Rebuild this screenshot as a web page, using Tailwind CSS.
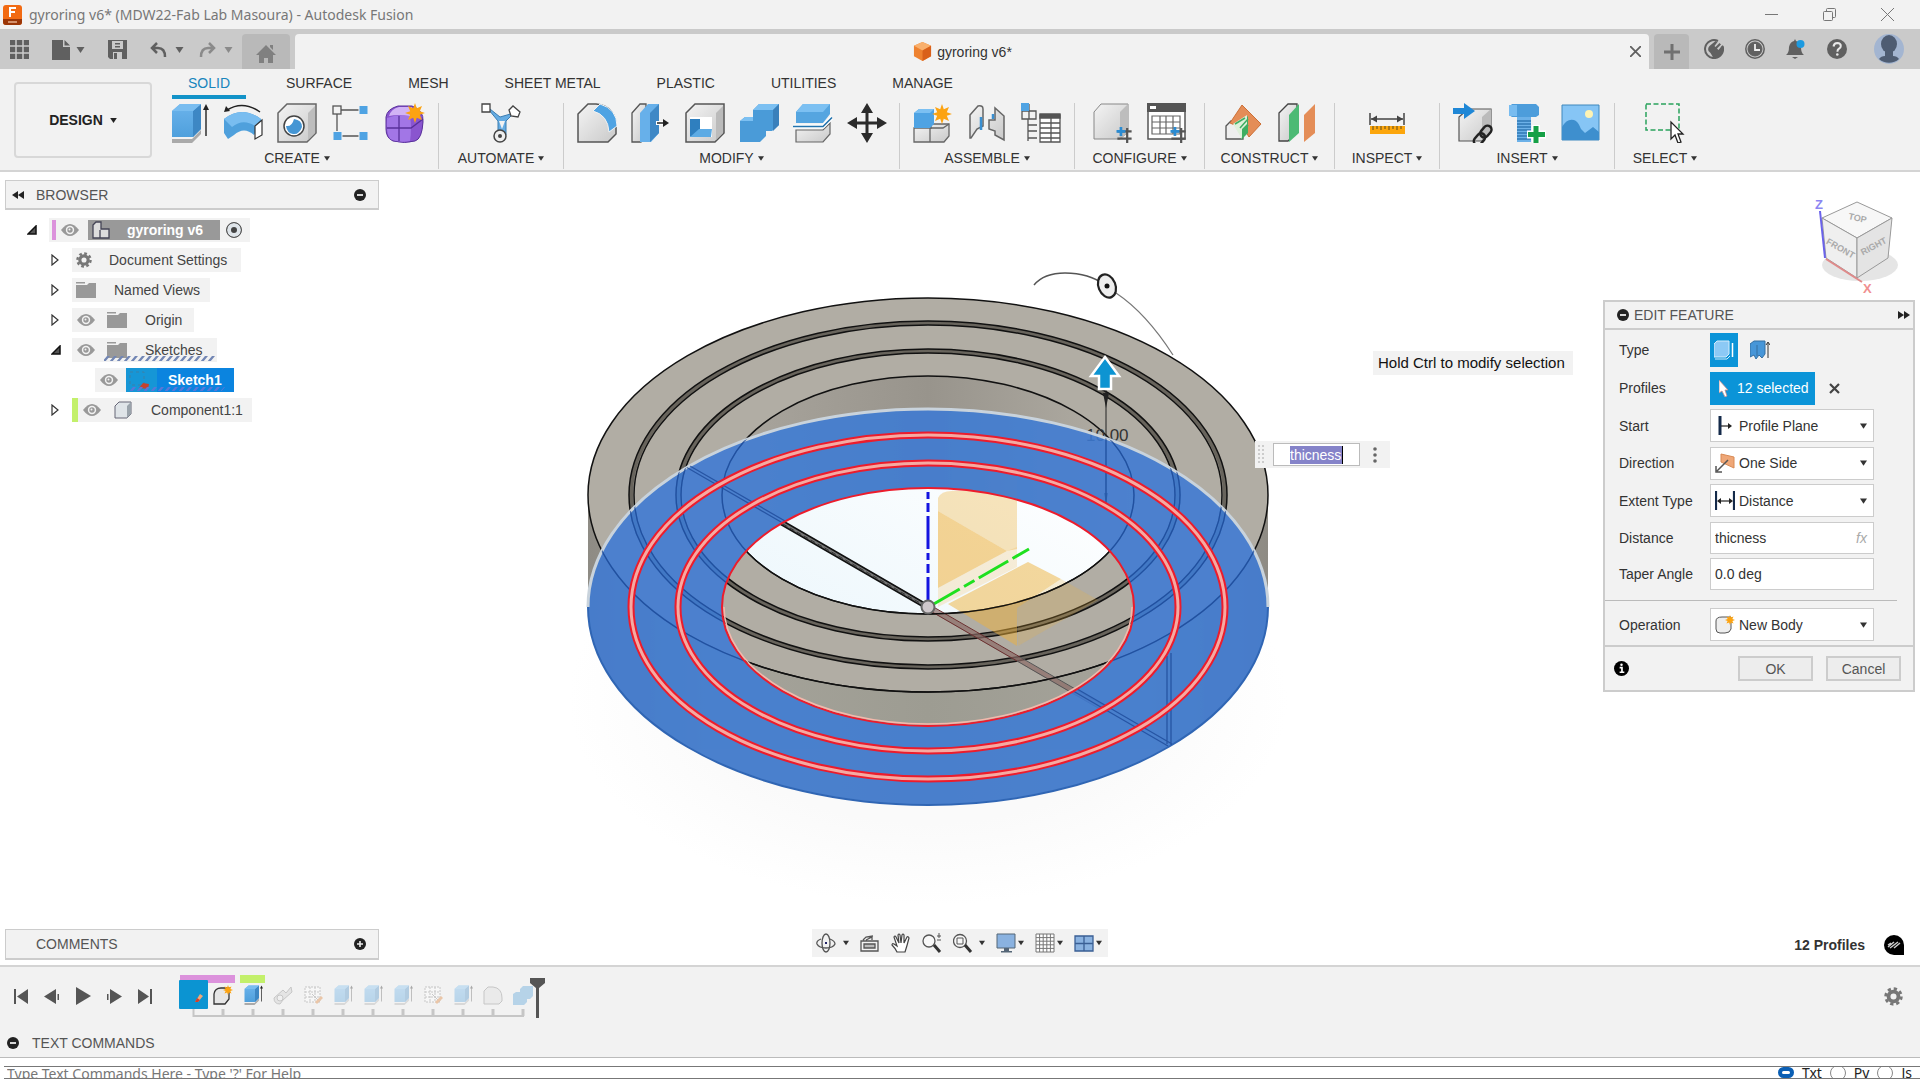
<!DOCTYPE html>
<html lang="en">
<head>
  <meta charset="UTF-8" />
  <meta name="viewport" content="width=device-width, initial-scale=1.0" />
  <title>gyroring v6* - Autodesk Fusion</title>
  <script src="https://cdn.jsdelivr.net/npm/@tailwindcss/browser@4"></script>
</head>
<body class="min-h-screen flex flex-col overflow-hidden bg-[#f2f2f2] text-sm text-[#333] font-['Liberation_Sans',Arial,sans-serif]">

  <!-- shared symbols -->
  <svg class="absolute size-0">
    <defs>
      <linearGradient id="blueG" x1="0" y1="0" x2="0" y2="1"><stop offset="0" stop-color="#6bb3ec" /><stop offset="1" stop-color="#4fa0dc" /></linearGradient>
      <linearGradient id="grayG" x1="0" y1="0" x2="1" y2="1"><stop offset="0" stop-color="#f4f4f4" /><stop offset="1" stop-color="#c9c9c9" /></linearGradient>
      <symbol id="extrude" viewBox="0 0 40 40">
        <path d="M3 36h20l9-9v4l-9 9H3z" fill="#aaa" />
        <path d="M3 8l8-7h21v25l-8 8H3z" fill="url(#blueG)" />
        <path d="M24 8l8-7v25l-8 8z" fill="#3d87c4" /><path d="M3 8l8-7h21l-8 7z" fill="#79bdf0" />
        <path d="M37 33V6" stroke="#222" stroke-width="1.4" /><path d="M37 1l3 6h-6z" fill="#222" />
      </symbol>
      <symbol id="eye" viewBox="0 0 20 14"><path d="M1 7q9-12 18 0q-9 12-18 0z" fill="#999" /><circle cx="10" cy="7" r="4.2" fill="#f2f2f2" /><circle cx="10" cy="7" r="2.7" fill="#999" /><circle cx="9.500" cy="6.500" r="1" fill="#f2f2f2" /></symbol>
      <symbol id="folder" viewBox="0 0 20 16"><path d="M0 3h11l2-2h7v15H0z" fill="#999" /><path d="M0 0h9v1.500H0z" fill="#999" /></symbol>
      <symbol id="closed" viewBox="0 0 8 12"><path d="M1 1v10l6-5z" fill="#fff" stroke="#333" stroke-width="1.200" /></symbol>
      <symbol id="open" viewBox="0 0 10 10"><path d="M1 9h8V1z" fill="#555" stroke="#111" stroke-width="1.500" /></symbol>
      <symbol id="caret" viewBox="0 0 8 6"><path d="M0 0h8L4 6z" fill="currentColor" /></symbol>
      <symbol id="gear" viewBox="0 0 20 20"><circle cx="10" cy="10" r="5.200" fill="none" stroke="#777" stroke-width="4" /><circle cx="10" cy="10" r="8.200" fill="none" stroke="#777" stroke-width="3" stroke-dasharray="3.440 3" /></symbol>
      <symbol id="minus" viewBox="0 0 12 12"><circle cx="6" cy="6" r="6" fill="#222" /><path d="M3 6h6" stroke="#eee" stroke-width="1.800" /></symbol>
      <symbol id="star" viewBox="0 0 20 20"><path d="M10 0l1.800 5.200L17 3l-2.200 5.200L20 10l-5.200 1.800L17 17l-5.200-2.200L10 20l-1.800-5.200L3 17l2.200-5.200L0 10l5.200-1.800L3 3l5.200 2.200z" fill="#fca311" /></symbol>
      <symbol id="sketch" viewBox="0 0 20 20"><path d="M2 2h15v15H2zM2 7h15M2 12h15M7 2v15M12 2v15" fill="#fff" stroke="#888" stroke-width="1" stroke-dasharray="2 1" /><path d="M9 9l8 8" stroke="#888" /><path d="M12 17l6-6 2 2-6 6z" fill="#e0863c" /></symbol>
      <symbol id="config" viewBox="0 0 18 18"><path d="M1 5h16M1 13h16" stroke="#555" stroke-width="2.500" /><path d="M5 0v10M0 5h10" stroke="#2a8bd2" stroke-width="3" /><path d="M12 1v8M12 9v9" stroke="#555" stroke-width="2.500" /></symbol>
    </defs>
  </svg>

  <!-- window title -->
  <header class="h-[29px] shrink-0 flex items-center pl-[3px] pr-[26px] text-[#777]">
    <svg class="w-[19px] h-5" viewBox="0 0 19 20"><rect width="19" height="20" rx="3" fill="#f26a12" /><path d="M0 14h19v3a3 3 0 0 1-3 3H3a3 3 0 0 1-3-3z" fill="#9b3708" /><path d="M7 12V3h6M7 7h5" stroke="#fff" stroke-width="2" fill="none" /><path d="M5 17h9" stroke="#e9b08c" stroke-width="1.500" /></svg>
    <h1 class="ml-[7px] flex-1 font-['Noto_Sans','Open_Sans',sans-serif]">gyroring v6* (MDW22-Fab Lab Masoura) - Autodesk Fusion</h1>
    <div class="flex items-center gap-[45px]">
      <button aria-label="Minimize"><svg class="size-[13px]" viewBox="0 0 13 13"><path d="M0 6.500h13" stroke="#777" /></svg></button>
      <button aria-label="Restore"><svg class="size-[13px]" viewBox="0 0 13 13" fill="none" stroke="#777"><rect x=".5" y="3.500" width="9" height="9" rx="1" /><path d="M3.500 3V1.500a1 1 0 0 1 1-1h7a1 1 0 0 1 1 1v7a1 1 0 0 1-1 1H10" /></svg></button>
      <button aria-label="Close window"><svg class="size-[13px]" viewBox="0 0 13 13"><path d="M0 0l13 13M13 0L0 13" stroke="#777" /></svg></button>
    </div>
  </header>

  <!-- document tabs -->
  <div class="h-10 shrink-0 flex bg-[#cacaca] pt-[5px] text-[#606060]">
    <div class="w-[242px] flex items-center pl-[10px] pb-1">
      <button aria-label="Data panel"><svg class="size-[19px]" viewBox="0 0 19 19"><path d="M0 0h19v19H0z" fill="#606060" /><path d="M6 0v19M13 0v19M0 6h19M0 13h19" stroke="#cacaca" stroke-width="1.500" /></svg></button>
      <button class="ml-[23px] flex items-center gap-[6px]" aria-label="File"><svg class="w-[18px] h-5" viewBox="0 0 18 20"><path d="M0 0h11v7h7v13H0z" fill="#606060" /><path d="M12.500 0l5.500 5.500h-5.500z" fill="#606060" /></svg><svg class="w-[9px] h-[6px]"><use href="#caret" /></svg></button>
      <button class="ml-[23px]" aria-label="Save"><svg class="size-[19px]" viewBox="0 0 19 19"><path d="M0 0h19v19H2l-2-2z" fill="#606060" /><path d="M4 1h11v8H4zM5 12h9v7H5z" fill="#cacaca" /><path d="M6 13h3v6H6zM7 3h5v1.500H7zM7 6h5v1.500H7z" fill="#606060" /></svg></button>
      <button class="ml-[23px] flex items-center gap-2" aria-label="Undo"><svg class="w-[17px] h-4" viewBox="0 0 17 16" fill="none" stroke="#606060" stroke-width="2.500"><path d="M7 1L2 6l5 5M2 6h6q7 0 7 9" /></svg><svg class="w-[9px] h-[6px]"><use href="#caret" /></svg></button>
      <button class="ml-[15px] flex items-center gap-2 text-[#8a8a8a]" aria-label="Redo"><svg class="w-[17px] h-4" viewBox="0 0 17 16" fill="none" stroke="#8a8a8a" stroke-width="2.500"><path d="M10 1l5 5-5 5M15 6H9q-7 0-7 9" /></svg><svg class="w-[9px] h-[6px]"><use href="#caret" /></svg></button>
    </div>
    <button class="w-12 rounded-t bg-[#b9b9b9] flex items-center justify-center pt-1" aria-label="Home"><svg class="w-5 h-[18px]" viewBox="0 0 20 18"><path d="M10 0l10 10h-3v8h-5v-5H8v5H3v-8H0zM14 0h3v5l-3-3z" fill="#808080" /></svg></button>
    <div class="ml-[5px] flex-1 flex items-center rounded-t bg-[#f2f2f2] pr-2">
      <div class="flex-1 flex items-center justify-center gap-[5px] text-[#333]">
        <svg class="size-[19px]" viewBox="0 0 20 20"><path d="M10 0l9 4v11l-9 5-9-5V4z" fill="#ee8230" /><path d="M10 0l9 4-9 5-9-5z" fill="#f9b06d" /><path d="M10 9l9-5v11l-9 5z" fill="#d9601a" /></svg>
        <span>gyroring v6*</span>
      </div>
      <button aria-label="Close tab"><svg class="size-[11px]" viewBox="0 0 11 11"><path d="M0 0l11 11M11 0L0 11" stroke="#606060" stroke-width="1.800" /></svg></button>
    </div>
    <button class="ml-[5px] w-[35px] bg-[#b9b9b9] rounded-t flex items-center justify-center" aria-label="New design"><svg class="size-4" viewBox="0 0 16 16"><path d="M8 0v16M0 8h16" stroke="#707070" stroke-width="3" /></svg></button>
    <div class="flex items-center gap-[21px] pl-[15px] pr-4 pb-[5px]">
      <button aria-label="Extensions"><svg class="size-5" viewBox="0 0 20 20"><path d="M14 2A9 9 0 1 0 18.500 7" fill="none" stroke="#606060" stroke-width="2" /><path d="M18.500 6a9 9 0 0 1-9 13l-3-5-2-2q-1-3 1-5l6-5 2 1-3 4 1 1 4-4 1.500 1.500-4 4 1.500 1.500z" fill="#606060" /></svg></button>
      <button aria-label="Job status"><svg class="size-5" viewBox="0 0 20 20" fill="none" stroke="#606060"><circle cx="10" cy="10" r="9.200" stroke-width="1.500" /><circle cx="10" cy="10" r="7" fill="#606060" /><path d="M10 5v6h5" stroke="#eee" stroke-width="1.800" /></svg></button>
      <button aria-label="Notifications"><svg class="size-5" viewBox="0 0 20 20"><path d="M0 16q3-2 3-8 1-5 5-6l1-2 1 2q4 1 5 6 0 6 3 8z" fill="#606060" /><path d="M6 18h6l-3 2z" fill="#606060" /><circle cx="14.500" cy="5" r="4" fill="#1c9ae0" /></svg></button>
      <button aria-label="Help"><svg class="size-5" viewBox="0 0 20 20"><circle cx="10" cy="10" r="10" fill="#606060" /><path d="M6.500 7.500q.5-3.500 3.800-3.500 3.500.2 3.500 3 0 1.500-1.800 2.700-1.600 1-1.600 3" fill="none" stroke="#e8e8e8" stroke-width="2" /><circle cx="10.300" cy="15.500" r="1.300" fill="#e8e8e8" /></svg></button>
      <button class="ml-[6px]" aria-label="Account"><svg class="size-[30px]" viewBox="0 0 30 30"><circle cx="15" cy="15" r="15" fill="#a3b5d1" /><ellipse cx="15" cy="10" rx="8" ry="9" fill="#4e5c72" /><path d="M11 16h8v6q4 0 6 3a15 15 0 0 1-20 0q2-3 6-3z" fill="#4e5c72" /></svg></button>
    </div>
  </div>

  <!-- ribbon -->
  <div class="h-[103px] shrink-0 flex border-b-2 border-[#d4d4d4]">
    <div class="w-[156px] pl-[14px] pr-1 pt-[13px]">
      <button class="w-full h-[76px] rounded border-2 border-[#d8d8d8] flex items-center justify-center gap-[7px] font-bold text-[#222]">DESIGN <svg class="w-[7px] h-[5px]"><use href="#caret" /></svg></button>
    </div>
    <div class="flex flex-col">
      <nav class="flex gap-6 pl-4 h-[30px]">
        <a href="#" class="px-4 pt-[6px] leading-4 border-b-4 border-[#1393c8] text-[#1885bd]">SOLID</a>
        <a href="#" class="px-4 pt-[6px] leading-4">SURFACE</a>
        <a href="#" class="px-4 pt-[6px] leading-4">MESH</a>
        <a href="#" class="px-4 pt-[6px] leading-4">SHEET METAL</a>
        <a href="#" class="px-4 pt-[6px] leading-4">PLASTIC</a>
        <a href="#" class="px-4 pt-[6px] leading-4">UTILITIES</a>
        <a href="#" class="px-4 pt-[6px] leading-4">MANAGE</a>
      </nav>
      <div class="flex h-[66px] mt-1">
        <section class="w-[283px] border-r border-[#ccc] flex flex-col items-center gap-[5px]">
          <div class="flex gap-[14px]">
            <svg class="size-10"><use href="#extrude" /></svg>
            <svg class="size-10" viewBox="0 0 40 40"><path d="M1 16q18-14 37 0l1 2-8 14q-10-9-20 0L5 36l-4-6z" fill="#4fa0dc" /><path d="M1 16q18-14 37 0l-6 7q-12-8-23 1z" fill="#79bdf0" /><path d="M32 23l7-6v15l-7 4z" fill="#fff" stroke="#333" stroke-width="1.200" /><path d="M37 9Q20-3 4 7" stroke="#222" stroke-width="1.500" fill="none" /><path d="M1 9l2-6 4 5z" fill="#222" /></svg>
            <svg class="size-10" viewBox="0 0 40 40"><path d="M1 10l9-9h29v29l-9 9H1z" fill="url(#grayG)" stroke="#666" stroke-width="1.500" /><path d="M31 10l7-7v27l-7 7z" fill="#bdbdbd" /><circle cx="17" cy="23" r="10" fill="#fff" stroke="#444" stroke-width="1.500" /><path d="M9 23q6 1 8-7 8 1 8 8-3 8-9 7-6-1-7-8z" fill="#4596d4" /></svg>
            <svg class="size-10" viewBox="0 0 40 40"><path d="M6 8v24M8 7h24M8 33h24" stroke="#555" stroke-width="1.300" /><rect x="2" y="3" width="8" height="8" fill="#f2f2f2" stroke="#555" stroke-width="1.300" /><path d="M28 2.500h9v9h-9zM2 28.500h9v9H2zM28 28.500h9v9h-9z" fill="#4fa3e3" stroke="#f2f2f2" stroke-width="1" /></svg>
            <svg class="size-10" viewBox="0 0 40 40"><path d="M1 14Q2 6 13 3h14q12 4 11 16-1 17-8 19-10 3-22 0-7-3-7-12z" fill="#8a55cf" stroke="#58309a" /><path d="M2 15Q12 11 25 13q2 12 0 25-12 2-20-2-4-6-3-21z" fill="#a276e6" /><path d="M4 13Q6 6 14 4h13l-2 9q-12-2-21 0z" fill="#d2b3f5" /><path d="M14 13v25M2 25h24l12-9" stroke="#58309a" stroke-width="1.300" fill="none" /><use href="#star" x="20" y="0" width="20" height="20" /></svg>
          </div>
          <button class="flex items-center gap-1">CREATE <svg class="w-[6px] h-[7px]"><use href="#caret" /></svg></button>
        </section>
        <section class="w-[125px] border-r border-[#ccc] flex flex-col items-center gap-[5px]">
          <svg class="size-10" viewBox="0 0 40 40"><path d="M8 7l9 11v14h8V18l8-8-14 4-10-8z" fill="#65ace3" stroke="#3a7cb0" /><path d="M18 18h6l-3 8z" fill="#f2f2f2" /><path d="M1 1h8v8H1zM28 7l4-4 7 6-2 5-7-1z" fill="#fff" stroke="#444" stroke-width="1.300" /><circle cx="19" cy="33" r="6" fill="#eee" stroke="#444" stroke-width="1.500" /><circle cx="19" cy="33" r="2" fill="#444" /></svg>
          <button class="flex items-center gap-1">AUTOMATE <svg class="w-[6px] h-[7px]"><use href="#caret" /></svg></button>
        </section>
        <section class="w-[336px] border-r border-[#ccc] flex flex-col items-center gap-[5px]">
          <div class="flex gap-[14px]">
            <svg class="size-10" viewBox="0 0 40 40"><path d="M1 11L11 1h8q20 2 20 24v6l-8 8H1z" fill="url(#grayG)" stroke="#555" stroke-width="1.500" /><path d="M16 8l7-7q17 5 17 22l-8 6Q31 12 16 8z" fill="#4fa3e3" stroke="#f2f2f2" /></svg>
            <svg class="size-10" viewBox="0 0 40 40"><path d="M1 10l8-9h6v29l-5 9H1z" fill="url(#grayG)" stroke="#555" stroke-width="1.300" /><path d="M9 10l8-9h11v29l-8 9H9z" fill="#67b0ea" /><path d="M19 10l9-9v29l-9 9z" fill="#3e88c6" /><path d="M25 20h8" stroke="#fff" stroke-width="4" /><path d="M26 20h9" stroke="#222" stroke-width="1.500" /><path d="M32 16l6 4-6 4z" fill="#222" /></svg>
            <svg class="size-10" viewBox="0 0 40 40"><path d="M1 10l9-9h29v29l-9 9H1z" fill="url(#grayG)" stroke="#555" stroke-width="1.500" /><path d="M31 10l7-7v27l-7 7z" fill="#bbb" /><path d="M5 14h22v20H5z" fill="#fff" /><path d="M5 16h10v13l-10 5z" fill="#2f7fbf" /><path d="M14 26h13l-1 8H5z" fill="#5dabe4" /></svg>
            <svg class="size-10" viewBox="0 0 40 40"><path d="M1 18l5-4h8V7l6-6h20v21l-7 6h-6v5l-6 6H1z" fill="#4a9bd8" /><path d="M1 18l5-4h8v4zM14 7l6-6h20l-6 6z" fill="#7cc0f2" /><path d="M34 7l6-6v21l-6 6z" fill="#3a80bb" /></svg>
            <svg class="size-10" viewBox="0 0 40 40"><path d="M3 9l7-8h27v10l-7 9H3z" fill="#55a5e0" /><path d="M3 9l7-8h27l-7 8z" fill="#7cc0f2" /><path d="M3 27h27l7-7v11l-7 8H3z" fill="url(#grayG)" stroke="#666" stroke-width="1.200" /><path d="M0 23.500h30l9-9" stroke="#fff" stroke-width="4" fill="none" /><path d="M0 23.500h30l9-9" stroke="#2373ad" stroke-width="1.600" fill="none" /></svg>
            <svg class="size-10" viewBox="0 0 40 40"><path d="M20 4v32M4 20h32" stroke="#2b2b2b" stroke-width="3" /><path d="M20 0l6 10H14zM20 40l6-10H14zM0 20l10-6v12zM40 20l-10-6v12z" fill="#2b2b2b" /></svg>
          </div>
          <button class="flex items-center gap-1">MODIFY <svg class="w-[6px] h-[7px]"><use href="#caret" /></svg></button>
        </section>
        <section class="w-[175px] border-r border-[#ccc] flex flex-col items-center gap-[5px]">
          <div class="flex gap-[14px]">
            <svg class="size-10" viewBox="0 0 40 40"><path d="M1 25h17v-4h18v12l-5 6H1z" fill="url(#grayG)" stroke="#666" stroke-width="1.300" /><path d="M17 24v15M17 25h13l6-4" stroke="#666" stroke-width="1.300" fill="none" /><path d="M1 10l5-4h15v15l-4 4H1z" fill="#4fa3e3" /><path d="M1 10l5-4h15l-4 4z" fill="#7cc0f2" /><use href="#star" x="19" y="1" width="20" height="20" /></svg>
            <svg class="size-10" viewBox="0 0 40 40"><path d="M3 12l8-9q5-1 5 3v17l-6 3-6 9H3zM37 13l-9-8v12h-6v9l6 2v4l9 5z" fill="url(#grayG)" stroke="#666" stroke-width="1.500" /><path d="M14 14v13M26 11v5" stroke="#3a90d2" stroke-width="2.500" /></svg>
            <svg class="size-10" viewBox="0 0 40 40" fill="none" stroke="#555" stroke-width="1.300"><path d="M7 16v22M7 22h9M7 28h9M7 35h9M1 8h14v8H1zM8 1v15" /><path d="M0 0h8v8H0z" fill="#4fa3e3" stroke="none" /><path d="M19 12h20v27H19zM19 20h20M19 25h20M19 30h20M19 35h20M30 12v27" fill="#fff" /><path d="M19 11h20v4H19z" fill="#555" /></svg>
          </div>
          <button class="flex items-center gap-1">ASSEMBLE <svg class="w-[6px] h-[7px]"><use href="#caret" /></svg></button>
        </section>
        <section class="w-[130px] border-r border-[#ccc] flex flex-col items-center gap-[5px]">
          <div class="flex gap-[14px]">
            <svg class="size-10" viewBox="0 0 40 40"><path d="M1 9l7-8h27v28l-8 7H1z" fill="url(#grayG)" stroke="#888" /><path d="M27 9l8-8v28l-8 7z" fill="#bdbdbd" /><use href="#config" x="23" y="24" width="17" height="16" /></svg>
            <svg class="size-10" viewBox="0 0 40 40"><path d="M1 1h37v35H1z" fill="#fff" stroke="#555" stroke-width="1.500" /><path d="M0 0h39v9H0z" fill="#555" /><path d="M3 3h6v3H3z" fill="#fff" /><path d="M5 13h28v18H5zM5 19h28M5 25h28M13 13v18M19 13v18M26 13v18" fill="none" stroke="#666" stroke-width="1.200" /><use href="#config" x="23" y="24" width="17" height="16" /></svg>
          </div>
          <button class="flex items-center gap-1">CONFIGURE <svg class="w-[6px] h-[7px]"><use href="#caret" /></svg></button>
        </section>
        <section class="w-[130px] border-r border-[#ccc] flex flex-col items-center gap-[5px]">
          <div class="flex gap-[14px]">
            <svg class="size-10" viewBox="0 0 40 40"><path d="M3 23l5-5h12v18H3z" fill="#eee" stroke="#555" stroke-width="1.300" /><path d="M19 2l19 19-12 13-5-8-14-6z" fill="#e48d57" stroke="#cc6f36" /><path d="M18 37V20l7-7v17z" fill="#3fae62" /><path d="M10 21l14-9v9l-5 5v10z" fill="#dff0da" /><path d="M12 21l10-6M17 25l8-9M20 30l5-8" stroke="#3fae62" stroke-width="1.500" /></svg>
            <svg class="size-10" viewBox="0 0 40 40"><path d="M2 10l9-9h9v28l-9 9H2z" fill="url(#grayG)" stroke="#444" stroke-width="1.300" /><path d="M12 12L22 1v29L12 39z" fill="#4cba74" /><path d="M27 12L38 1v29l-11 9z" fill="#e48d57" /></svg>
          </div>
          <button class="flex items-center gap-1">CONSTRUCT <svg class="w-[6px] h-[7px]"><use href="#caret" /></svg></button>
        </section>
        <section class="w-[105px] border-r border-[#ccc] flex flex-col items-center gap-[5px]">
          <svg class="size-10" viewBox="0 0 40 40"><path d="M3 10v12M37 10v12M4 16h32" stroke="#444" stroke-width="1.500" /><path d="M4 16l6-3.500v7zM36 16l-6-3.500v7z" fill="#444" /><path d="M3 23h35v8H3z" fill="#fca60c" /><path d="M6 23v4M10 23v3M14 23v4M18 23v3M22 23v4M26 23v3M30 23v4M34 23v3" stroke="#5c4a1a" /></svg>
          <button class="flex items-center gap-1">INSPECT <svg class="w-[6px] h-[7px]"><use href="#caret" /></svg></button>
        </section>
        <section class="w-[175px] border-r border-[#ccc] flex flex-col items-center gap-[5px]">
          <div class="flex gap-[14px]">
            <svg class="size-10" viewBox="0 0 40 40"><path d="M6 14l9-8h23v23l-9 9H6z" fill="url(#grayG)" stroke="#555" stroke-width="1.200" /><path d="M29 14l9-8v23l-9 9z" fill="#bbb" /><path d="M0 5h11V0l11 8-11 8v-5H0z" fill="#1f87d6" /><g fill="none" stroke="#222" stroke-width="2.500" transform="rotate(-50 30 32)"><rect x="18" y="28" width="13" height="8" rx="4" /><rect x="28" y="28" width="13" height="8" rx="4" /></g></svg>
            <svg class="size-10" viewBox="0 0 40 40"><path d="M2 4l3-3h24l3 3v8l-3 2H5l-3-2z" fill="#4d9ddb" /><path d="M2 2h8v11H2z" fill="#78bcf0" /><path d="M10 14h14v25H10z" fill="#6cb1e8" /><path d="M10 18h14M10 21h14M10 24h14M10 27h14M10 30h14M10 33h14M10 36h14" stroke="#2f78b4" stroke-width="1.300" /><path d="M29 22v19M20 31.500h19" stroke="#fff" stroke-width="8" /><path d="M29 23v17M21 31.500h17" stroke="#16a046" stroke-width="5" /></svg>
            <svg class="size-10" viewBox="0 0 40 40"><path d="M1 2h37v35H1z" fill="#86c5f5" stroke="#3f88bd" /><path d="M1 24q5-9 12-7 4 1 7 9l4 4 8-6 6 5v8H1z" fill="#3e8fce" /><circle cx="28" cy="11" r="4" fill="#fdf3b4" /></svg>
          </div>
          <button class="flex items-center gap-1">INSERT <svg class="w-[6px] h-[7px]"><use href="#caret" /></svg></button>
        </section>
        <section class="w-[100px] flex flex-col items-center gap-[5px]">
          <svg class="size-10" viewBox="0 0 40 40"><rect x="1" y="1" width="33" height="26" fill="none" stroke="#2aa35c" stroke-width="1.500" stroke-dasharray="5 2.500" /><path d="M26 19v17l4-4 3 8 3-1-3-8h5z" fill="#fff" stroke="#222" stroke-width="1.300" /></svg>
          <button class="flex items-center gap-1">SELECT <svg class="w-[6px] h-[7px]"><use href="#caret" /></svg></button>
        </section>
      </div>
    </div>
  </div>

  <!-- modelling canvas -->
  <main class="relative flex-1 flex flex-col justify-between bg-white overflow-hidden">
    <svg class="absolute inset-0 size-full" viewBox="0 172 1920 793" preserveAspectRatio="xMidYMid slice" fill="none">
      <defs>
        <linearGradient id="wall" x1="588" x2="1268" y1="0" y2="0" gradientUnits="userSpaceOnUse"><stop offset="0" stop-color="#8e8b84" /><stop offset=".2" stop-color="#a5a39a" /><stop offset=".5" stop-color="#9d9c92" /><stop offset=".8" stop-color="#a5a39a" /><stop offset="1" stop-color="#8e8b84" /></linearGradient>
        <linearGradient id="bore" x1="722" x2="1134" y1="0" y2="0" gradientUnits="userSpaceOnUse"><stop offset="0" stop-color="#aaa69e" /><stop offset=".5" stop-color="#98948c" /><stop offset="1" stop-color="#b2aea5" /></linearGradient>
        <linearGradient id="sky" x1="0" x2="1" y1="1" y2="0"><stop offset="0" stop-color="#e6f4fb" /><stop offset="1" stop-color="#fff" /></linearGradient>
        <radialGradient id="shade"><stop offset=".6" stop-color="#fafafa" /><stop offset="1" stop-color="#fff" /></radialGradient>
        <clipPath id="topHole"><ellipse cx="928" cy="495" rx="206" ry="119" /></clipPath>
        <clipPath id="baseHole"><ellipse cx="928" cy="607" rx="206" ry="119" /></clipPath>
        <!-- profile ring without its bore -->
        <clipPath id="profile"><path clip-rule="evenodd" d="M588 607a340 198 0 1 0 680 0a340 198 0 1 0-680 0zM722 607a206 119 0 1 0 412 0a206 119 0 1 0-412 0z" /></clipPath>
      </defs>
      <ellipse cx="928" cy="700" rx="360" ry="205" fill="url(#shade)" />
      <!-- body -->
      <path d="M588 495v112a340 197 0 0 0 680 0V495z" fill="url(#wall)" />
      <ellipse cx="928" cy="495" rx="340" ry="197" fill="#b1ada4" stroke="#111" stroke-width="1.500" />
      <ellipse cx="928" cy="495" rx="206" ry="119" fill="url(#bore)" />
      <g clip-path="url(#topHole)"><ellipse cx="928" cy="607" rx="206" ry="119" fill="url(#sky)" /></g>
      <g stroke="#68645c" stroke-width="4"><ellipse cx="928" cy="495" rx="297" ry="172" /><ellipse cx="928" cy="495" rx="250" ry="144" /></g>
      <g stroke="#111" stroke-width="1.500">
        <ellipse cx="928" cy="495" rx="299" ry="174" /><ellipse cx="928" cy="495" rx="294" ry="170" />
        <ellipse cx="928" cy="495" rx="252" ry="146" /><ellipse cx="928" cy="495" rx="247" ry="142" />
        <ellipse cx="928" cy="495" rx="206" ry="119" />
      </g>
      <path d="M1106 390v110" stroke="#222" /><path d="M1106 408l-3-15h6zM1106 503l-2-10h4z" fill="#222" />
      <text x="1086" y="441" font-size="17" fill="#333">10.00</text>
      <!-- origin planes -->
      <g fill="#eeb13c">
        <path d="M938 498q3-7 14-7h65v58l-10 2-69-40z" opacity=".35" />
        <path d="M1007 551l10-4v20l-79 40v-19z" opacity=".2" />
        <path d="M952 491v-25h65v25z" opacity=".08" />
        <path d="M938 511l69 40-69 37z" opacity=".55" />
        <path d="M948 604l80-42 33 17-44 29v38z" opacity=".5" />
        <path d="M1017 608l44-29 37 21-80 46z" opacity=".22" />
      </g>
      <path d="M781 522l147 85" stroke="#777" stroke-width="4" /><path d="M780 524l147 85M783 521l145 84" stroke="#111" stroke-width="1.500" /><path d="M783 524l144 83" stroke="#333" stroke-dasharray="5 3" />
      <path d="M928 607l178 103" stroke="#8b6b66" stroke-width="5" opacity=".7" /><path d="M927 609l90 52M930 605l90 52" stroke="#6a3030" /><path d="M1017 661l88 51M1020 657l88 51" stroke="#555" />
      <!-- selected profiles -->
      <path fill-rule="evenodd" fill="#3d7bd4" fill-opacity=".87" d="M588 607a340 198 0 1 0 680 0a340 198 0 1 0-680 0zM722 607a206 119 0 1 0 412 0a206 119 0 1 0-412 0z" />
      <path d="M588 607a340 198 0 0 1 680 0" stroke="#c9d3dc" stroke-width="3" />
      <path d="M588 607a340 198 0 0 0 680 0" stroke="#3066b4" stroke-width="2" />
      <g clip-path="url(#profile)" stroke="#1b4796" stroke-width="1.300" opacity=".75">
        <path d="M686 467l95 55M690 466l95 55M1068 688l100 58M1072 686l100 58M1167 656v88M1171 653v92M1106 408v95" />
        <ellipse cx="928" cy="495" rx="340" ry="197" /><ellipse cx="928" cy="495" rx="299" ry="174" /><ellipse cx="928" cy="495" rx="294" ry="170" />
        <ellipse cx="928" cy="495" rx="252" ry="146" /><ellipse cx="928" cy="495" rx="247" ry="142" /><ellipse cx="928" cy="495" rx="206" ry="119" />
      </g>
      <!-- the bore shows the uncovered edges again -->
      <g clip-path="url(#baseHole)" stroke="#111" stroke-width="1.300">
        <ellipse cx="928" cy="495" rx="340" ry="197" /><ellipse cx="928" cy="495" rx="206" ry="119" />
      </g>
      <g stroke="#ec1c2c" stroke-width="7"><ellipse cx="928" cy="607" rx="297" ry="172" /><ellipse cx="928" cy="607" rx="250" ry="144" /></g>
      <g stroke="#f5aaa2" stroke-width="3"><ellipse cx="928" cy="607" rx="297" ry="172" /><ellipse cx="928" cy="607" rx="250" ry="144" /></g>
      <ellipse cx="928" cy="607" rx="206" ry="119" stroke="#ec1c2c" stroke-width="2" />
      <path d="M724 607a204 117 0 0 0 408 0" stroke="#f3b9ac" stroke-width="1.500" />
      <!-- axes -->
      <path d="M928 492v108" stroke="#1414e0" stroke-width="3" stroke-dasharray="7 4 9 4 33 4" />
      <path d="M932 605l97-56" stroke="#1fe01f" stroke-width="3" stroke-dasharray="32 5 12 5 34 5" />
      <circle cx="928" cy="607" r="6.500" fill="#cfc8cc" stroke="#666" stroke-width="2" />
      <!-- manipulators -->
      <path d="M1034 285q10-12 31-12 24 0 40 12" stroke="#555" stroke-width="1.500" /><path d="M1116 293q30 20 57 62" stroke="#777" stroke-width="1.200" />
      <ellipse cx="1107" cy="286" rx="8.500" ry="12" transform="rotate(-22 1107 286)" fill="#eee" stroke="#222" stroke-width="2.200" /><circle cx="1107" cy="286" r="2.500" fill="#111" />
      <path d="M1105 357l14 19h-8v13h-12v-13h-8z" fill="#0d94d2" stroke="#fff" stroke-width="2.500" />
    </svg>

    <!-- inline dimension box -->
    <div class="absolute left-1/2 top-[269px] ml-[295px] h-[27px] flex items-center bg-[#f2f2f2] pl-[3px]">
      <svg class="w-[9px] h-6" viewBox="0 0 9 24"><path d="M1 2v20M5 2v20" stroke="#ccc" stroke-width="2" stroke-dasharray="2 2" /></svg>
      <div class="ml-[6px] w-[87px] h-[23px] flex items-center justify-center border border-[#bbb] bg-white">
        <input aria-label="Dimension" value="thicness" class="w-[53px] h-[18px] border-r border-black bg-[#8583c9] text-white" />
      </div>
      <button class="w-[30px] flex justify-center" aria-label="More"><svg class="w-1 h-4" viewBox="0 0 4 16" fill="#666"><circle cx="2" cy="2" r="1.800" /><circle cx="2" cy="8" r="1.800" /><circle cx="2" cy="14" r="1.800" /></svg></button>
    </div>
    <div role="tooltip" class="absolute left-1/2 top-[179px] ml-[413px] h-6 w-[200px] px-[5px] flex items-center bg-[#f2f2f2] text-[#111] whitespace-nowrap text-[15px]">Hold Ctrl to modify selection</div>

    <div class="relative flex justify-between items-start pl-[5px] pr-[5px]">
      <!-- browser tree -->
      <aside class="w-[374px] pt-2">
        <div class="h-[30px] flex items-center border border-b-2 border-[#ccc] bg-[#f2f2f2] pl-[6px] pr-3">
          <button aria-label="Collapse"><svg class="w-3 h-2" viewBox="0 0 12 8"><path d="M6 0v8L0 4zM12 0v8L6 4z" fill="#222" /></svg></button>
          <h2 class="ml-3 flex-1 text-[#555]">BROWSER</h2>
          <button aria-label="Minimize browser"><svg class="size-3"><use href="#minus" /></svg></button>
        </div>
        <ul class="mt-2 flex flex-col gap-[6px] text-[#444] leading-6">
          <li class="flex items-center h-6 pl-[22px]">
            <svg class="size-[10px]"><use href="#open" /></svg>
            <div class="ml-3 h-6 flex items-center bg-[#f2f2f2] pl-[3px] pr-2">
              <span class="w-1 h-5 bg-[#dc92dc]"></span>
              <svg class="ml-1 w-5 h-[14px]"><use href="#eye" /></svg>
              <span class="ml-2 h-5 w-[132px] flex items-center bg-[#999] text-white font-bold leading-5">
                <svg class="ml-1 size-[18px]" viewBox="0 0 18 18"><path d="M1 4l3-3h5v7h8v9H1zM8 9v8" fill="#ddd" stroke="#445" stroke-width="1.300" /></svg>
                <span class="flex-1 text-center">gyroring v6</span>
              </span>
              <input type="radio" checked aria-label="Activate gyroring v6" class="ml-[6px] size-4 appearance-none rounded-full border border-[#555] bg-[#444] shadow-[inset_0_0_0_4px_#dfe5ea]" />
            </div>
          </li>
          <li class="flex items-center h-6 pl-[46px]">
            <svg class="w-2 h-3"><use href="#closed" /></svg>
            <div class="ml-[13px] h-6 flex items-center bg-[#f2f2f2] pl-1 pr-[14px]"><svg class="size-4"><use href="#gear" /></svg><span class="ml-[17px]">Document Settings</span></div>
          </li>
          <li class="flex items-center h-6 pl-[46px]">
            <svg class="w-2 h-3"><use href="#closed" /></svg>
            <div class="ml-[13px] h-6 flex items-center bg-[#f2f2f2] pl-1 pr-[10px]"><svg class="w-5 h-4"><use href="#folder" /></svg><span class="ml-[18px]">Named Views</span></div>
          </li>
          <li class="flex items-center h-6 pl-[46px]">
            <svg class="w-2 h-3"><use href="#closed" /></svg>
            <div class="ml-[13px] h-6 flex items-center bg-[#f2f2f2] pl-1 pr-3"><svg class="w-5 h-[14px]"><use href="#eye" /></svg><svg class="ml-[11px] w-5 h-4"><use href="#folder" /></svg><span class="ml-[18px]">Origin</span></div>
          </li>
          <li class="flex items-center h-6 pl-[46px]">
            <svg class="size-[10px]"><use href="#open" /></svg>
            <div class="relative ml-[11px] h-6 flex items-center bg-[#f2f2f2] pl-1 pr-[14px]"><svg class="w-5 h-[14px]"><use href="#eye" /></svg><svg class="ml-[11px] w-5 h-4"><use href="#folder" /></svg><span class="ml-[18px]">Sketches</span>
              <svg class="absolute left-8 bottom-[1px] w-[112px] h-[5px]" viewBox="0 0 112 5"><path d="M3 2.500h108" stroke="#7286b4" stroke-width="5" stroke-dasharray="3 4" transform="skewX(-40)" /></svg>
            </div>
          </li>
          <li class="flex items-center h-6 pl-[90px]">
            <span class="h-6 w-[31px] flex items-center bg-[#f2f2f2] pl-1"><svg class="w-5 h-[14px]"><use href="#eye" /></svg></span>
            <span class="relative w-[108px] h-6 flex items-center bg-[#0b84df] text-white font-bold">
              <svg class="w-8 h-6" viewBox="0 0 32 24"><path d="M0 0h31v24H0z" fill="#1696d6" /><path d="M4 4h14v13H4z" fill="none" stroke="#3a80a8" stroke-dasharray="3 3" /><path d="M13 20l4-5 6 1-1 5z" fill="#c4412f" /></svg>
              <span class="ml-[10px]">Sketch1</span>
              <svg class="absolute left-1 bottom-[1px] w-[98px] h-1" viewBox="0 0 98 4"><path d="M3 2h92" stroke="#5a77d8" stroke-width="4" stroke-dasharray="3 4" transform="skewX(-40)" /></svg>
            </span>
          </li>
          <li class="flex items-center h-6 pl-[46px]">
            <svg class="w-2 h-3"><use href="#closed" /></svg>
            <div class="ml-[13px] h-6 flex items-center bg-[#f2f2f2] pr-[9px]"><span class="w-[6px] h-6 bg-[#c3f06b]"></span><svg class="ml-1 w-5 h-[14px]"><use href="#eye" /></svg>
              <svg class="ml-3 size-[18px]" viewBox="0 0 18 18"><path d="M1 5l4-4h12v12l-4 4H1z" fill="#dfe4e8" stroke="#667" /><path d="M13 5l4-4v12l-4 4z" fill="#9aa3ab" /></svg><span class="ml-[19px]">Component1:1</span></div>
          </li>
        </ul>
      </aside>

      <div class="w-[312px]">
        <!-- view cube -->
        <svg class="ml-[200px] mt-5 w-[102px] h-[108px]" viewBox="1803 192 102 108">
          <ellipse cx="1860" cy="265" rx="38" ry="16" fill="#ccc" opacity=".5" />
          <path d="M1857 202l35 16-35 20-35-20z" fill="#f7f7f7" stroke="#999" /><path d="M1822 218l35 20v40l-31-20z" fill="#efefef" stroke="#999" /><path d="M1892 218l-35 20v40l31-20z" fill="#e4e4e4" stroke="#999" />
          <path d="M1820 211l5 47" stroke="#6a62ea" stroke-width="2" /><path d="M1826 259l36 23" stroke="#e08a8a" stroke-width="2" />
          <g font-weight="bold" font-size="9" fill="#aaa" text-anchor="middle"><text x="1857" y="221" transform="rotate(12 1857 221)">TOP</text><text x="1839" y="251" transform="rotate(30 1839 251)">FRONT</text><text x="1875" y="249" transform="rotate(-28 1875 249)">RIGHT</text></g>
          <text x="1815" y="209" font-size="13" font-weight="bold" fill="#8c86f2">Z</text><text x="1863" y="293" font-size="13" font-weight="bold" fill="#f08f8f">X</text>
        </svg>
        <!-- edit feature -->
        <form class="border-2 border-[#ccc] bg-[#f2f2f2]">
          <div class="h-7 flex items-center border-b-2 border-[#ccc] pl-3 pr-[3px]">
            <button type="button" aria-label="Collapse panel"><svg class="size-3"><use href="#minus" /></svg></button>
            <h2 class="ml-[5px] flex-1 text-[#555]">EDIT FEATURE</h2>
            <button type="button" aria-label="Dock"><svg class="w-3 h-2" viewBox="0 0 12 8"><path d="M0 0v8l6-4zM6 0v8l6-4z" fill="#222" /></svg></button>
          </div>
          <div class="h-[262px] flex flex-col justify-between pt-[3px] pl-[14px] pb-[2px]">
            <div class="flex items-center"><span class="w-[91px]">Type</span>
              <button type="button" class="w-7 h-[34px] bg-[#0b94d8] flex items-center justify-center" aria-label="Extrude"><svg class="size-5" viewBox="0 0 20 20"><path d="M0 4l3-3h12v13l-3 3H0z" fill="#8cc9f5" stroke="#d5ecfb" /><path d="M1 19h12l3-3" stroke="#d5ecfb" fill="none" /><path d="M18.500 17V3" stroke="#fff" stroke-width="1.500" /></svg></button>
              <button type="button" class="ml-3 w-5" aria-label="Thin extrude"><svg class="size-5" viewBox="0 0 20 20"><path d="M0 4l4-3h11v13l-3 4-3-3-3 4-2-4-4 2z" fill="#4796d8" stroke="#356ea0" /><path d="M7 5v11" stroke="#356ea0" /><path d="M18 18V3M16 5l2-3 2 3" stroke="#333" fill="none" /></svg></button>
            </div>
            <div class="flex items-center"><span class="w-[91px]">Profiles</span>
              <button type="button" class="w-[105px] h-[33px] bg-[#0b94d8] text-white flex items-center pl-[9px] gap-[9px]"><svg class="w-[9px] h-[17px]" viewBox="0 0 9 17"><path d="M0 0v13l3-2 3 6 2-1-2-6h3z" fill="#fff" stroke="#c58b8b" stroke-width=".8" /></svg>12 selected</button>
              <button type="button" class="ml-[14px]" aria-label="Clear selection"><svg class="size-[11px]" viewBox="0 0 11 11"><path d="M1 1l9 9M10 1l-9 9" stroke="#444" stroke-width="2.200" /></svg></button>
            </div>
            <div class="flex items-center"><label for="start" class="w-[91px]">Start</label>
              <div class="w-[164px] h-[33px] flex items-center border border-[#ccc] bg-white pl-1 pr-[6px]"><svg class="size-5" viewBox="0 0 20 20"><path d="M5 0v19" stroke="#142a4a" stroke-width="3" /><path d="M6 10h9" stroke="#222" stroke-width="1.200" /><path d="M13 7l4 3-4 3z" fill="#222" /></svg><select id="start" class="ml-1 flex-1 appearance-none"><option>Profile Plane</option></select><svg class="w-[7px] h-[6px]"><use href="#caret" /></svg></div>
            </div>
            <div class="flex items-center"><label for="direction" class="w-[91px]">Direction</label>
              <div class="w-[164px] h-[33px] flex items-center border border-[#ccc] bg-white pl-1 pr-[6px]"><svg class="size-5" viewBox="0 0 20 20"><path d="M6 1l13 3v11L6 9z" fill="#efa777" stroke="#d98a55" /><path d="M13 7L2 18M1 13v6h6" stroke="#555" stroke-width="1.500" fill="none" /></svg><select id="direction" class="ml-1 flex-1 appearance-none"><option>One Side</option></select><svg class="w-[7px] h-[6px]"><use href="#caret" /></svg></div>
            </div>
            <div class="flex items-center"><label for="extent" class="w-[91px]">Extent Type</label>
              <div class="w-[164px] h-[33px] flex items-center border border-[#ccc] bg-white pl-1 pr-[6px]"><svg class="size-5" viewBox="0 0 20 20"><path d="M1 0v19M19 0v19" stroke="#142a4a" stroke-width="2.200" /><path d="M4 10h12" stroke="#222" stroke-width="1.200" /><path d="M2 10l4-3v6zM18 10l-4-3v6z" fill="#222" /></svg><select id="extent" class="ml-1 flex-1 appearance-none"><option>Distance</option></select><svg class="w-[7px] h-[6px]"><use href="#caret" /></svg></div>
            </div>
            <div class="flex items-center"><label for="distance" class="w-[91px]">Distance</label>
              <div class="w-[164px] h-8 flex items-center border border-[#ccc] bg-white px-1"><input id="distance" value="thicness" class="w-0 flex-1" /><i class="text-[#aaa] pr-[2px]">fx</i></div>
            </div>
            <div class="flex items-center"><label for="taper" class="w-[91px]">Taper Angle</label>
              <input id="taper" value="0.0 deg" class="w-[164px] h-8 border border-[#ccc] bg-white px-1" />
            </div>
          </div>
          <div class="mt-2 mr-4 border-t border-[#bbb]"></div>
          <div class="mt-[7px] pl-[14px] flex items-center"><label for="operation" class="w-[91px]">Operation</label>
            <div class="w-[164px] h-[33px] flex items-center border border-[#ccc] bg-white pl-1 pr-[6px]"><svg class="size-5" viewBox="0 0 20 20"><path d="M1 6q0-4 6-4h9v12q-1 4-6 4H5q-4 0-4-4z" fill="#eee" stroke="#555" /><use href="#star" x="10" y="0" width="10" height="10" /></svg><select id="operation" class="ml-1 flex-1 appearance-none"><option>New Body</option></select><svg class="w-[7px] h-[6px]"><use href="#caret" /></svg></div>
          </div>
          <div class="mt-1 h-[45px] flex items-center border-t-2 border-[#ccc] pl-[9px] pr-3 text-[#555]">
            <svg class="size-[15px]" viewBox="0 0 16 16"><circle cx="8" cy="8" r="8" fill="#000" /><path d="M6 7h2.500v5M6 12h5" stroke="#fff" stroke-width="1.800" fill="none" /><circle cx="8" cy="4" r="1.300" fill="#fff" /></svg>
            <button type="button" class="ml-auto w-[75px] h-[25px] border-2 border-[#ccc] bg-[#ededed] leading-5">OK</button>
            <button type="button" class="ml-[13px] w-[75px] h-[25px] border-2 border-[#ccc] bg-[#ededed] leading-5">Cancel</button>
          </div>
        </form>
      </div>
    </div>

    <div class="relative grid grid-cols-[1fr_auto_1fr] items-start pl-[5px] pr-4 pb-[5px]">
      <div class="w-[374px] h-[31px] flex items-center border border-b-2 border-[#ccc] bg-[#f2f2f2] pl-[30px] pr-3">
        <h2 class="flex-1 text-[#555]">COMMENTS</h2>
        <button aria-label="Add comment"><svg class="size-3" viewBox="0 0 12 12"><circle cx="6" cy="6" r="6" fill="#222" /><path d="M3 6h6M6 3v6" stroke="#eee" stroke-width="1.600" /></svg></button>
      </div>
      <!-- navigation toolbar -->
      <div class="ml-[11px] w-[296px] h-7 flex items-center justify-between bg-[#f2f2f2] pl-1 pr-[6px] text-[#333]">
        <button class="flex items-center gap-[7px]" aria-label="Orbit"><svg class="size-5" viewBox="0 0 20 20" fill="none" stroke="#555" stroke-width="1.300"><ellipse cx="10" cy="10" rx="4" ry="9" /><path d="M5 6q-5 2-4 5 2 4 9 4t9-4q0-3-5-5" /><path d="M10 9v2" stroke="#226" stroke-width="2" /></svg><svg class="w-[6px] h-[6px]"><use href="#caret" /></svg></button>
        <button aria-label="Look at"><svg class="w-5 h-[18px]" viewBox="0 0 20 18" fill="none" stroke="#555" stroke-width="1.300"><path d="M1 7h17v10H1zM3 6l3-3 7-1M6 6l6-3v3" /><path d="M4 10h11v4H4z" fill="#bbb" /></svg></button>
        <button aria-label="Pan"><svg class="size-5" viewBox="0 0 20 20" fill="#fff" stroke="#444" stroke-width="1.200"><path d="M6 19q-1-3-5-7 0-2 2-1l3 2L3 4q1-2 2 0l3 6L7 2q1-2 2 0l1 8 1-8q1-2 2 0v8l3-6q1-1 2 1-2 8-4 14z" /></svg></button>
        <button aria-label="Zoom"><svg class="size-5" viewBox="0 0 20 20" fill="none" stroke="#555"><circle cx="7" cy="8" r="6" fill="#f8f8f8" stroke-width="1.300" /><path d="M12 12l6 7" stroke="#333" stroke-width="3" /><path d="M17 0v5M15 3h4M15 7h4" /></svg></button>
        <button class="flex items-center gap-[6px]" aria-label="Fit"><svg class="size-5" viewBox="0 0 20 20" fill="none" stroke="#555"><circle cx="7" cy="8" r="6.500" fill="#f8f8f8" stroke-width="1.300" /><path d="M4 5h6v6H4z" /><path d="M12 12l6 7" stroke="#333" stroke-width="3" /></svg><svg class="w-[6px] h-[6px]"><use href="#caret" /></svg></button>
        <button class="flex items-center gap-[2px]" aria-label="Display"><svg class="size-5" viewBox="0 0 20 20"><path d="M1 1h18v14H1z" fill="#8ab2e0" stroke="#567" /><path d="M8 15h5v3h3v1.500H5V18h3z" fill="#567" /></svg><svg class="w-[6px] h-[6px]"><use href="#caret" /></svg></button>
        <button class="flex items-center gap-[2px]" aria-label="Grid"><svg class="size-5" viewBox="0 0 20 20" fill="#fff" stroke="#777"><path d="M1 1h18v18H1zM1 4.600h18M1 8.200h18M1 11.800h18M1 15.400h18M4.600 1v18M8.200 1v18M11.800 1v18M15.400 1v18" /></svg><svg class="w-[6px] h-[6px]"><use href="#caret" /></svg></button>
        <button class="flex items-center gap-[2px]" aria-label="Viewports"><svg class="w-5 h-[17px]" viewBox="0 0 20 17"><path d="M1 1h18v15H1zM10 1v15M1 8.500h18" fill="#8ab2e0" stroke="#3a5f94" stroke-width="1.300" /></svg><svg class="w-[6px] h-[6px]"><use href="#caret" /></svg></button>
      </div>
      <div class="flex items-center justify-end gap-[19px] pt-[6px] font-bold">12 Profiles
        <svg class="size-5" viewBox="0 0 20 20"><path d="M10 0a10 10 0 0 1 10 10v10H10a10 10 0 0 1 0-20z" fill="#000" /><path d="M4 12l6-5M6 13l8-6M10 13l6-5M4 10l3-2" stroke="#ccc" stroke-width="1.500" /></svg>
      </div>
    </div>
  </main>

  <footer class="shrink-0 border-t-2 border-[#d4d4d4]">
    <!-- timeline -->
    <div class="h-[61px] flex items-start pl-[5px] pr-[17px] pt-2">
      <div class="h-[42px] w-[173px] flex items-center text-[#555]">
        <button class="w-[31px] flex justify-center" aria-label="To start"><svg class="w-4 h-[15px]" viewBox="0 0 16 15" fill="#555"><path d="M1 0h2v15H1zM15 0v15L4 7.500z" /></svg></button>
        <button class="w-[31px] flex justify-center" aria-label="Step back"><svg class="w-4 h-[15px]" viewBox="0 0 16 15" fill="#555"><path d="M12 0v15L0 7.500zM13.500 5H15v6h-1.500z" /></svg></button>
        <button class="w-[31px] flex justify-center" aria-label="Play"><svg class="w-4 h-[18px]" viewBox="0 0 16 18" fill="#555"><path d="M1 0v18l15-9z" /></svg></button>
        <button class="w-[31px] flex justify-center" aria-label="Step forward"><svg class="w-4 h-[15px]" viewBox="0 0 16 15" fill="#555"><path d="M4 0v15l12-7.500zM1 5h1.500v6H1z" /></svg></button>
        <button class="w-[31px] flex justify-center" aria-label="To end"><svg class="w-4 h-[15px]" viewBox="0 0 16 15" fill="#555"><path d="M13 0h2v15h-2zM1 0v15l11-7.500z" /></svg></button>
      </div>
      <div class="w-[360px]">
        <div class="flex gap-[5px] pl-[2px]"><span class="w-[55px] h-2 bg-[#dc92dc]"></span><span class="w-[25px] h-2 bg-[#c3f06b]"></span></div>
        <div class="relative -mt-[3px] grid grid-cols-12 h-[29px] place-items-center">
          <svg class="w-[29px] h-[29px]" viewBox="0 0 29 29"><rect width="29" height="29" rx="1" fill="#0b94d2" /><path d="M16 22l5-8 3 2-5 6z" fill="#f0a878" /><path d="M16 22l2-4 3 2-2 2z" fill="#d2402c" /></svg>
          <svg class="size-5" viewBox="0 0 20 20"><path d="M1 9q1-6 7-6h8v11l-4 5H1z" fill="#e6e6e6" stroke="#333" stroke-width="1.300" /><use href="#star" x="10" y="0" width="10" height="10" /></svg>
          <svg class="size-5"><use href="#extrude" /></svg>
          <svg class="size-5 opacity-35" viewBox="0 0 20 20"><path d="M1 13l9-8 3 3 5-6 1 5-9 8-3 4q-6 0-6-6z" fill="#ccc" stroke="#777" /><circle cx="7" cy="13" r="3" fill="#eee" stroke="#777" /></svg>
          <svg class="size-5 opacity-40"><use href="#sketch" /></svg>
          <svg class="size-5 opacity-35"><use href="#extrude" /></svg>
          <svg class="size-5 opacity-35"><use href="#extrude" /></svg>
          <svg class="size-5 opacity-35"><use href="#extrude" /></svg>
          <svg class="size-5 opacity-40"><use href="#sketch" /></svg>
          <svg class="size-5 opacity-35"><use href="#extrude" /></svg>
          <svg class="size-5 opacity-35" viewBox="0 0 20 20"><path d="M1 6l4-4h5q9 1 9 11v3l-3 3H1z" fill="#ddd" stroke="#777" /></svg>
          <svg class="size-5 opacity-35" viewBox="0 0 20 20"><path d="M0 9l3-2h4V4l3-3h10v10l-3 3h-3v3l-3 3H0z" fill="#4a9bd8" /></svg>
        </div>
        <svg class="w-[360px] h-[10px]" viewBox="0 0 360 10"><path d="M15.500 0v7H346" stroke="#c6c6c6" stroke-width="2" fill="none" /><path d="M45 0v7M75 0v7M105 0v7M135 0v7M165 0v7M195 0v7M225 0v7M255 0v7M285 0v7M315 0v7M345 0v7" stroke="#c6c6c6" stroke-width="3" /></svg>
      </div>
      <svg class="relative -ml-2 mt-[3px] w-[15px] h-10" viewBox="0 0 15 40"><path d="M0 0h15v5l-6 5v30H6V10L0 5z" fill="#555" /></svg>
      <button class="ml-auto mt-3" aria-label="Timeline settings"><svg class="size-[19px]"><use href="#gear" /></svg></button>
    </div>
    <!-- text commands -->
    <div class="h-[30px] flex items-center border-b border-[#bbb] pl-[7px] gap-[13px] text-[#555]">
      <button aria-label="Collapse text commands"><svg class="size-3"><use href="#minus" /></svg></button>
      <h2>TEXT COMMANDS</h2>
    </div>
    <div class="h-[22px] bg-white pt-[8px] pl-1">
      <div class="h-[13px] flex items-center overflow-hidden border-y border-[#777] pl-[3px] pr-2 gap-2 text-[#222] font-['Noto_Sans','Open_Sans',sans-serif]">
        <input aria-label="Text command" placeholder="Type Text Commands Here - Type '?' For Help" class="flex-1 pt-[2px] placeholder:text-[#777]" />
        <label class="flex items-center gap-2"><input type="radio" name="lang" checked class="appearance-none w-4 h-[11px] rounded-full border-4 border-[#0b5fb4] bg-white" />Txt</label>
        <label class="flex items-center gap-2"><input type="radio" name="lang" class="appearance-none size-4 rounded-full border border-[#888]" />Py</label>
        <label class="flex items-center gap-2"><input type="radio" name="lang" class="appearance-none size-4 rounded-full border border-[#888]" />Js</label>
      </div>
    </div>
  </footer>
</body>
</html>
